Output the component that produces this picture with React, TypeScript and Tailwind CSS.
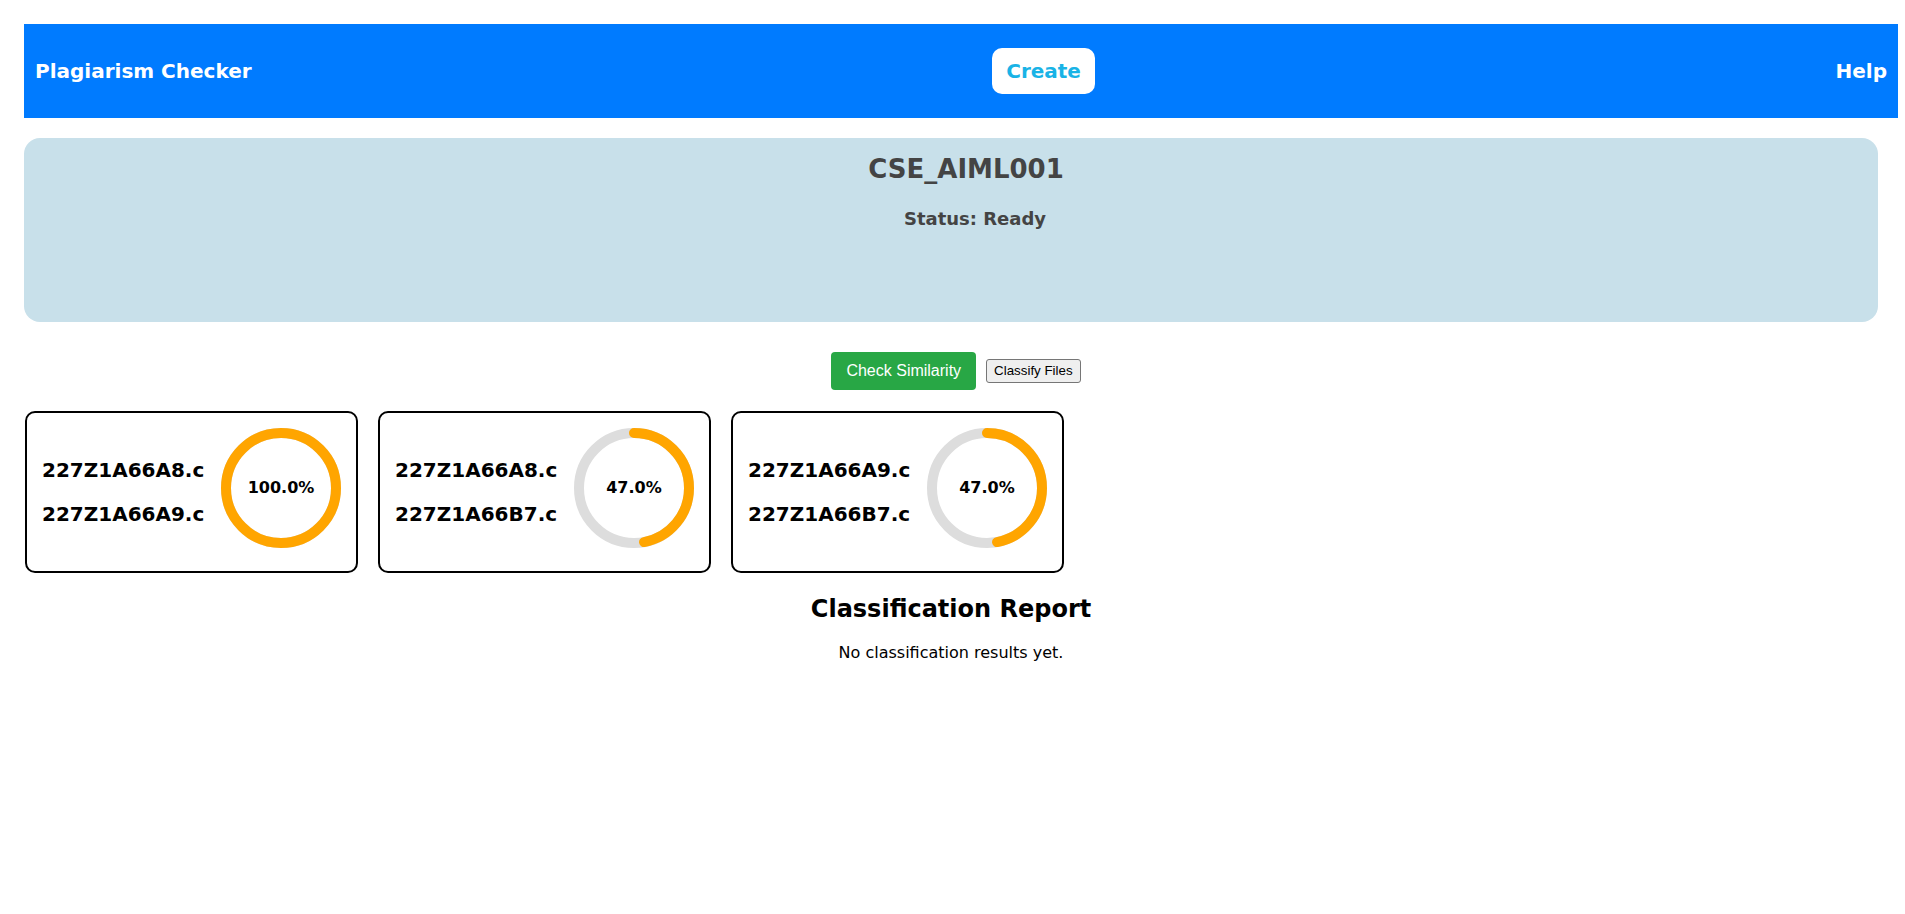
const font = "font-['Verdana','DejaVu_Sans',sans-serif]";

const pairs = [
  { a: "227Z1A66A8.c", b: "227Z1A66A9.c", score: 100.0 },
  { a: "227Z1A66A8.c", b: "227Z1A66B7.c", score: 47.0 },
  { a: "227Z1A66A9.c", b: "227Z1A66B7.c", score: 47.0 },
];

const Ring = ({ value }: { value: number }) => {
  const r = 55;
  const c = 2 * Math.PI * r;
  return (
    <div className="relative w-[120px] h-[120px] mb-2 shrink-0">
      <svg width="120" height="120" viewBox="0 0 120 120" className="-rotate-90">
        <circle cx="60" cy="60" r={r} fill="none" stroke="#dddddd" strokeWidth="10" />
        <circle
          cx="60"
          cy="60"
          r={r}
          fill="none"
          stroke="#ffa500"
          strokeWidth="10"
          strokeLinecap="round"
          strokeDasharray={`${(c * value) / 100} ${c}`}
        />
      </svg>
      <div className="absolute inset-0 flex items-center justify-center text-[16px] font-bold text-black">
        {value.toFixed(1)}%
      </div>
    </div>
  );
};

export default function App() {
  return (
    <div className={`${font} bg-white min-h-[914px] pt-6 pl-6`}>
      {/* navbar */}
      <div className="w-[1874px] h-[94px] bg-[#007bff] flex items-center justify-between px-[11px]">
        <span className="text-white font-bold text-[20px]">Plagiarism Checker</span>
        <button className="bg-white rounded-[10px] px-[14px] py-2 text-[20px] font-bold text-[#19b3e6]">
          Create
        </button>
        <span className="text-white font-bold text-[20px]">Help</span>
      </div>

      {/* project panel */}
      <div className="w-[1854px] h-[184px] mt-5 bg-[#c8e0ea] rounded-2xl pt-[12px] text-[#444444]">
        <h1 className="text-center text-[26px] font-bold pl-[30px]">CSE_AIML001</h1>
        <p className="text-center text-[18px] font-bold pl-[48px] mt-[16px]">Status: Ready</p>
      </div>

      {/* actions */}
      <div className="w-[1854px] flex items-center justify-center gap-[10px] mt-[30px] pl-[10px]">
        <button className="bg-[#28a745] text-white rounded-[4px] px-[15px] py-[10px] text-[16px] leading-[18px] font-['Arial','Liberation_Sans',sans-serif]">
          Check Similarity
        </button>
        <button className="bg-[#efefef] border border-[#767676] rounded-[3px] px-[7px] py-[1px] text-[13.33px] text-black font-['Arial','Liberation_Sans',sans-serif]">
          Classify Files
        </button>
      </div>

      {/* similarity cards */}
      <div className="flex gap-[20px] mt-[21px] pl-px">
        {pairs.map((p, i) => (
          <div
            key={i}
            className="w-[333px] h-[162px] border-2 border-black rounded-[10px] flex items-center justify-between px-[15px]"
          >
            <div className="flex flex-col gap-5 text-[20px] font-bold text-black leading-[24px]">
              <span>{p.a}</span>
              <span>{p.b}</span>
            </div>
            <Ring value={p.score} />
          </div>
        ))}
      </div>

      {/* classification */}
      <div className="w-[1854px] text-center text-black">
        <h2 className="text-[24px] font-bold mt-[22px] leading-[29px]">Classification Report</h2>
        <p className="text-[16px] mt-[17px]">No classification results yet.</p>
      </div>
    </div>
  );
}
